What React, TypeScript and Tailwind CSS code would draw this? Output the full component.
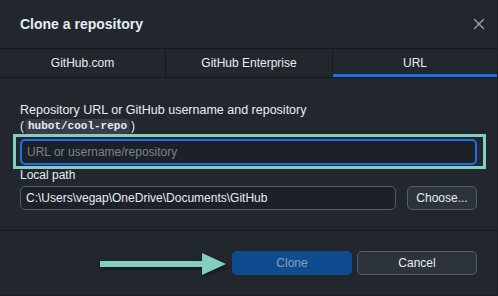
import React from 'react';
import { X } from 'lucide-react';

const tabs = ['GitHub.com', 'GitHub Enterprise', 'URL'];

const App: React.FC = () => {
  const activeTab = 2;

  return (
    <div className="flex h-[296px] w-[498px] flex-col overflow-hidden border-b border-r border-[#1a1e24] bg-[#22272e] font-['Liberation_Sans',Arial,sans-serif] text-[12px] text-[#e6edf3]">
      <div className="flex h-[48px] shrink-0 items-center justify-between pl-5 pr-[8px]">
        <h1 className="text-[14px] font-bold leading-5 text-[#e6edf3]">Clone a repository</h1>
        <button type="button" className="flex h-5 w-5 items-center justify-center text-[#9aa3ad]">
          <X className="h-[18px] w-[18px]" strokeWidth={1.8} />
        </button>
      </div>

      <div className="grid h-[30px] shrink-0 grid-cols-[166px_167px_1fr] border-y border-[#16191e]">
        {tabs.map((tab, i) => (
          <div
            key={tab}
            className={`relative flex items-center justify-center text-[12px] text-[#e6edf3] ${i < tabs.length - 1 ? 'border-r border-[#16191e]' : ''}`}
          >
            {tab}
            {i === activeTab ? (
              <span className="absolute inset-x-0 bottom-0 h-[3px] bg-[#1f6feb]" />
            ) : null}
          </div>
        ))}
      </div>

      <div className="flex flex-col border-b border-[#16191e] px-5 pb-5 pt-[24px]">
        <label className="text-[12.5px] leading-4">Repository URL or GitHub username and repository</label>
        <div className="flex h-4 items-center leading-4">
          (
          <code className="mx-[1px] rounded-[4px] bg-[#373e47] px-[3px] font-['Liberation_Mono','DejaVu_Sans_Mono',monospace] text-[11px] font-bold leading-[15px]">
            hubot/cool-repo
          </code>
          )
        </div>

        <div className="relative mt-[5px]">
          <input
            placeholder="URL or username/repository"
            className="h-[26px] w-full rounded-[5px] border-2 border-[#1f6feb] bg-[#1c2128] px-[5px] text-[12px] text-[#e6edf3] outline-none placeholder:text-[#768390]"
          />
          <div className="pointer-events-none absolute -bottom-[4px] -left-[7px] -right-[9px] -top-[5px] border-[3px] border-[#86cdc1]" />
        </div>

        <label className="mt-[2px] leading-4">Local path</label>
        <div className="mt-[3px] flex gap-[11px]">
          <input
            readOnly
            value="C:\Users\vegap\OneDrive\Documents\GitHub"
            className="h-6 flex-1 rounded-[5px] border border-[#545d68] bg-[#1c2128] px-[5px] text-[12px] text-[#e6edf3] outline-none"
          />
          <button
            type="button"
            className="h-6 w-[70px] rounded-[5px] border border-[#545d68] bg-[#2d333b] text-[12px] text-[#e6edf3]"
          >
            Choose...
          </button>
        </div>
      </div>

      <div className="relative flex flex-1 justify-end gap-[5px] px-5 pt-5">
        <svg
          className="absolute left-[98px] top-[21px] drop-shadow-[1px_2px_2px_rgba(0,0,0,0.45)]"
          width="132"
          height="26"
          viewBox="0 0 132 26"
        >
          <rect x="2" y="9" width="104" height="6" fill="#86cdc1" />
          <polygon points="104,1 128,12 104,23" fill="#86cdc1" />
        </svg>
        <button
          type="button"
          disabled
          className="h-6 w-[120px] rounded-[5px] bg-[#0f4c8f] text-[12px] text-[#8a9db5]"
        >
          Clone
        </button>
        <button
          type="button"
          className="h-6 w-[120px] rounded-[5px] border border-[#545d68] bg-[#2d333b] text-[12px] text-[#e6edf3]"
        >
          Cancel
        </button>
      </div>
    </div>
  );
};

export default App;
